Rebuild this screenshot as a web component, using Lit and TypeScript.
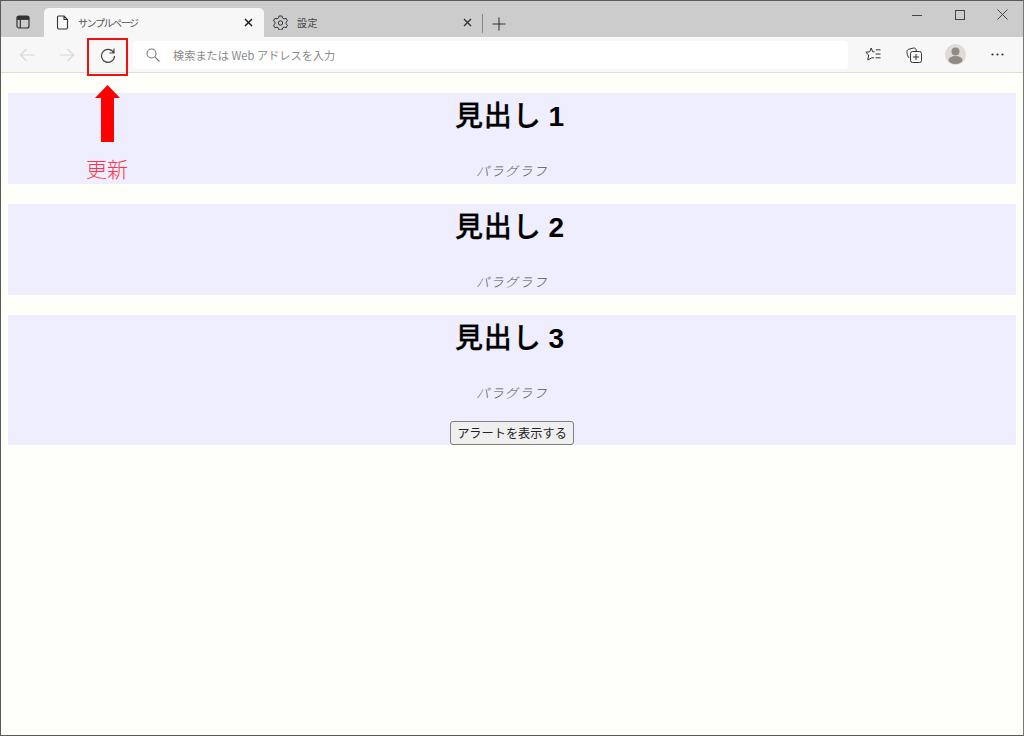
import { LitElement, html, css } from "lit";
import { customElement } from "lit/decorators.js";

const sec = (title: string, num: string) => html`
  <section class="sec">
    <h1>${title} <span>${num}</span></h1>
    <p>パラグラフ</p>
  </section>`;

@customElement("app-root")
export class AppRoot extends LitElement {
  static styles = css`
    :host {
      display: flex; flex-direction: column; position: relative; box-sizing: border-box;
      width: 1024px; height: 736px; overflow: hidden; background: #fffffa;
      border: 1px solid #5a5a5a; border-right-color: #777;
      font-family: "Noto Sans CJK JP", "Liberation Sans", sans-serif;
    }
    svg { display: block; flex: none; }
    .strip { height: 36px; background: #cccccc; display: flex; align-items: flex-end; flex: none; position: relative; }
    .tabside { width: 43px; height: 36px; display: flex; align-items: center; justify-content: center; box-sizing: border-box; padding: 6px 0 0 1px; }
    .tab { height: 29px; display: flex; align-items: center; box-sizing: border-box; font-size: 10px; color: #444; }
    .tab.on { width: 220px; background: #f7f7f7; border-radius: 5px 5px 0 0; padding: 0 11px 0 12px; color: #555; letter-spacing: -1.4px; }
    .tab.off { width: 217px; padding: 0 9px 0 9px; letter-spacing: 0.5px; }
    .tab span { flex: 1; margin-left: 9px; }
    .div { width: 1px; height: 19px; background: #888; margin: 0 9px 4px 1px; align-self: flex-end; }
    .plus { margin-bottom: 6px; }
    .win { position: absolute; right: -1px; top: 0; display: flex; align-items: center; height: 27px; }
    .win div { width: 43px; display: flex; justify-content: center; }
    .bar { height: 36px; background: #f7f7f7; border-bottom: 1px solid #dcdcdc; box-sizing: border-box; display: flex; align-items: center; flex: none; padding-left: 18px; }
    .nav { width: 40px; display: flex; justify-content: flex-start; }
    .nav.reload { margin-left: 1px; width: 33px; }
    .addr { width: 715px; height: 28px; background: #fff; border-radius: 4px; display: flex; align-items: center; padding-left: 13px; box-sizing: border-box; font-size: 11.2px; color: #8a8a8a; gap: 13px; }
    .tools { display: flex; align-items: center; margin-left: 17px; }
    .star { margin-right: 25px; }
    .coll { margin-right: 23px; }
    .avatar { width: 21px; height: 21px; margin-right: 25px; }
    main { padding: 20px 7px 0; display: flex; flex-direction: column; gap: 20px; }
    .sec { background: #eeeeff; text-align: center; height: 91px; display: flow-root; color: #000; }
    .sec.tall { height: 130px; }
    h1 { margin: 2px 0 0; padding-right: 4px; font-size: 28px; line-height: 38px; font-weight: 500; letter-spacing: 0.8px; -webkit-text-stroke: 0.3px #000; }
    h1 span { font-family: "Liberation Sans", sans-serif; font-weight: 700; -webkit-text-stroke: 0; }
    p { margin: 25px 0 0; font-size: 13px; line-height: 20px; letter-spacing: 1.4px; color: #555; font-style: italic; font-weight: 300; }
    button { margin-top: 18px; height: 24px; width: 124px; padding: 0; box-sizing: border-box; font: 12.2px "Noto Sans CJK JP", sans-serif; color: #222; background: #efefef; border: 1px solid #808080; border-radius: 3px; display: inline-block; line-height: 20px; }
    .box { position: absolute; left: 86px; top: 37px; width: 41px; height: 38px; box-sizing: border-box; border: 2px solid #f01010; }
    .arrow { position: absolute; left: 94px; top: 84px; }
    .label { position: absolute; left: 85px; top: 152px; font-size: 21px; line-height: 30px; color: #ff3344; font-weight: 300; }
  `;

  render() {
    return html`
      <div class="strip">
        <div class="tabside">
          <svg width="14" height="14" viewBox="0 0 14 14" fill="none" stroke="#333" stroke-width="1.2"><rect x="1" y="1" width="12" height="12" rx="2"/><path d="M1 4.200H13M4.300 4.200V13" /><path d="M1.500 1.500H12.500V4H1.500Z" fill="#333"/></svg>
        </div>
        <div class="tab on">
          <svg width="13" height="15" viewBox="0 0 13 15" fill="none" stroke="#333" stroke-width="1.1"><path d="M2.500 1H8L11.500 4.500V12.500a1.500 1.500 0 0 1-1.500 1.500H3a1.500 1.500 0 0 1-1.500-1.500V2A1 1 0 0 1 2.500 1ZM8 1V4.500H11.500"/></svg>
          <span>サンプルページ</span>
          <svg width="9" height="9" viewBox="0 0 9 9" stroke="#222" stroke-width="1.5"><path d="M1 1L8 8M8 1L1 8"/></svg>
        </div>
        <div class="tab off">
          <svg width="15" height="15" viewBox="0 0 15 15" fill="none" stroke="#333" stroke-width="1"><path d="M6 1h3l.5 2 1.600.9 2-.6 1.400 2.500-1.500 1.400v1.600l1.500 1.400-1.400 2.500-2-.6-1.600.9-.5 2H6l-.5-2-1.600-.9-2 .6L.5 10.200 2 8.800V7.200L.5 5.800l1.400-2.500 2 .6 1.600-.9Z"/><circle cx="7.500" cy="8" r="2.200"/></svg>
          <span>設定</span>
          <svg width="9" height="9" viewBox="0 0 9 9" stroke="#333" stroke-width="1.4"><path d="M1 1L8 8M8 1L1 8"/></svg>
        </div>
        <div class="div"></div>
        <svg class="plus" width="14" height="14" viewBox="0 0 14 14" stroke="#333" stroke-width="1.1"><path d="M7 0.500V13.500M0.500 7H13.500"/></svg>
        <div class="win">
          <div><svg width="10" height="10" viewBox="0 0 10 10" stroke="#444" stroke-width="1"><path d="M0 5.500H10"/></svg></div>
          <div><svg width="10" height="10" viewBox="0 0 10 10" fill="none" stroke="#444" stroke-width="1"><rect x=".5" y=".5" width="9" height="9"/></svg></div>
          <div><svg width="11" height="11" viewBox="0 0 11 11" stroke="#444" stroke-width="1"><path d="M.5 .5L10.500 10.500M10.500 .5L.5 10.500"/></svg></div>
        </div>
      </div>
      <div class="bar">
        <div class="nav"><svg width="16" height="14" viewBox="0 0 16 14" fill="none" stroke="#d8d8d8" stroke-width="1.2"><path d="M15.500 7H1.500M7.500 1L1.500 7L7.500 13"/></svg></div>
        <div class="nav"><svg width="16" height="14" viewBox="0 0 16 14" fill="none" stroke="#d8d8d8" stroke-width="1.2"><path d="M.5 7H14.500M8.500 1L14.500 7L8.500 13"/></svg></div>
        <div class="nav reload"><svg width="16" height="16" viewBox="0 0 16 16" fill="none" stroke="#444" stroke-width="1.2"><path d="M14.500 9A6.500 6.500 0 1 1 13.700 5.700M14 1.500V6H9.500"/></svg></div>
        <div class="addr">
          <svg width="14" height="14" viewBox="0 0 14 14" fill="none" stroke="#777" stroke-width="1.1"><circle cx="5.500" cy="5.500" r="4.500"/><path d="M8.800 8.800L13.500 13.500"/></svg>
          <span>検索または Web アドレスを入力</span>
        </div>
        <div class="tools">
          <svg class="star" width="16" height="15" viewBox="0 0 16 15" fill="none" stroke="#333" stroke-width="1"><path d="M9.500 4.800H7.700L6.200 1 4.700 4.800 .8 5.200 3.700 8 2.800 13 6.800 10.800H9M11 2.800H15.500M10.500 7H15.500M10.500 10.800H15.500"/></svg>
          <svg class="coll" width="16" height="16" viewBox="0 0 16 16" fill="none" stroke="#333" stroke-width="1"><path d="M3 11C1 8 1 6 1 4.500 1 3 2 2.500 3 2.200L7.500 1C9 .7 10 1.500 10.500 4.500"/><rect x="4.500" y="4.500" width="11" height="11" rx="2" /><path d="M10 7V13M7 10H13"/></svg>
          <svg class="avatar" viewBox="0 0 21 21">
            <circle cx="10.500" cy="10.500" r="10.500" fill="#dedbd8"/>
            <circle cx="10.500" cy="7.500" r="4" fill="#8f8c88"/>
            <ellipse cx="10.500" cy="16" rx="7" ry="4" fill="#8f8c88"/>
          </svg>
          <svg width="13" height="3" viewBox="0 0 13 3" fill="#333"><circle cx="1.500" cy="1.500" r="1.100"/><circle cx="6.500" cy="1.500" r="1.100"/><circle cx="11.500" cy="1.500" r="1.100"/></svg>
        </div>
      </div>
      <main>
        ${sec("見出し", "1")}
        ${sec("見出し", "2")}
        <section class="sec tall">
          <h1>見出し <span>3</span></h1>
          <p>パラグラフ</p>
          <button>アラートを表示する</button>
        </section>
      </main>
      <div class="box"></div>
      <svg class="arrow" width="25" height="57" viewBox="0 0 25 57" fill="#ff0000"><path d="M12.500 0L25 13H19V57H6V13H0Z"/></svg>
      <div class="label">更新</div>
    `;
  }
}
